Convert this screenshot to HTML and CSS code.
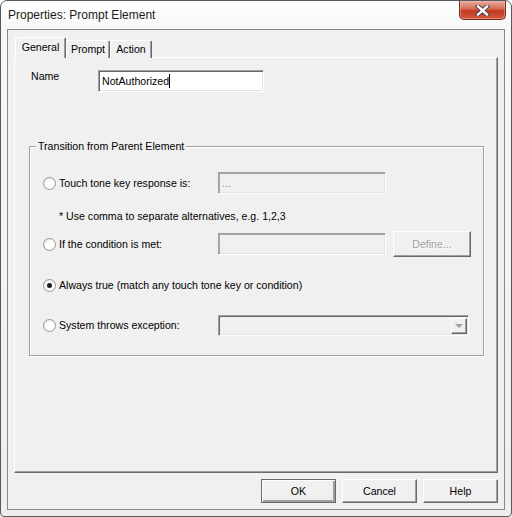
FILE: index.html
```html
<!DOCTYPE html>
<html lang="en">
<head>
    <meta charset="UTF-8">
    <title>Properties: Prompt Element</title>
    <link rel="stylesheet" href="styles.css">
</head>
<body>

<div class="window">
    <div class="titlebar">
        <span class="title">Properties: Prompt Element</span>
        <button class="close" title="Close">
            <svg width="17" height="11" viewBox="0 0 17 11">
                <path d="M4 1.5 L13 9.5 M13 1.5 L4 9.5" stroke="#3b3b4a" stroke-width="4.2" stroke-linecap="square"/>
                <path d="M4 1.5 L13 9.5 M13 1.5 L4 9.5" stroke="#fff" stroke-width="2.4" stroke-linecap="square"/>
            </svg>
        </button>
    </div>

    <div class="client">
        <div class="tabs">
            <div class="tab active">General</div>
            <div class="tab tab-prompt">Prompt</div>
            <div class="tab tab-action">Action</div>
        </div>

        <div class="panel">
            <div class="name-row">
                <label for="nameBox">Name</label>
                <div class="textbox" id="nameBox">NotAuthorized<span class="caret"></span></div>
            </div>

            <div class="group">
                <span class="group-title">Transition from Parent Element</span>

                <div class="opt opt-key">
                    <span class="radio-label"><span class="radio"></span>Touch tone key response is:</span>
                    <div class="textbox disabled wide">...</div>
                </div>

                <div class="note">* Use comma to separate alternatives, e.g. 1,2,3</div>

                <div class="opt opt-cond">
                    <span class="radio-label"><span class="radio"></span>If the condition is met:</span>
                    <div class="textbox disabled wide"></div>
                    <button class="btn define" disabled>Define...</button>
                </div>

                <div class="opt opt-always">
                    <span class="radio-label"><span class="radio checked"></span>Always true (match any touch tone key or condition)</span>
                </div>

                <div class="opt opt-exc">
                    <span class="radio-label"><span class="radio"></span>System throws exception:</span>
                    <div class="combo">
                        <span class="combo-btn"><span class="arrow"></span></span>
                    </div>
                </div>
            </div>
        </div>

        <div class="buttons">
            <button class="btn default">OK</button>
            <button class="btn">Cancel</button>
            <button class="btn">Help</button>
        </div>
    </div>
</div>

</body>
</html>
```

FILE: styles.css
```css
body {
    margin: 0;
    font-family: "Liberation Sans", Arial, sans-serif;
    font-size: 10.6px;
    color: #000;
    background: #fff;
}
.window {
    width: 512px;
    height: 517px;
    box-sizing: border-box;
    border: 1px solid #555a60;
    border-radius: 7px 7px 4px 4px;
    background: linear-gradient(#ffffff, #f7f7f7 28px, #eeeeee);
    overflow: hidden;
}
.titlebar {
    height: 28px;
    display: flex;
    align-items: flex-start;
}
.title {
    padding: 7px 0 0 7px;
    font-size: 12px;
    line-height: 15px;
    color: #1b1b1b;
}
.close {
    margin-left: auto;
    margin-right: 5px;
    width: 47px;
    height: 19px;
    padding: 0;
    border: 1px solid #6f2b1f;
    border-top: none;
    border-radius: 0 0 5px 5px;
    background: linear-gradient(#e9a99b, #d8735c 40%, #c2391f 55%, #d3593d);
    box-shadow: inset 0 0 0 1px rgba(255, 200, 190, 0.45);
    display: flex;
    align-items: center;
    justify-content: center;
}
.close svg {
    display: block;
}
.client {
    margin: 0 6px;
    width: 498px;
    height: 481px;
    box-sizing: border-box;
    border: 1px solid #868a8e;
    background: #f0f0f0;
    padding: 7px 6px 6px 6px;
}
.tabs {
    height: 21px;
    display: flex;
    align-items: flex-end;
    padding-left: 1px;
}
.tab {
    box-sizing: border-box;
    height: 18px;
    border: 1px solid #fff;
    border-right-color: #696969;
    border-bottom: none;
    border-radius: 2px 2px 0 0;
    box-shadow: inset -1px 0 0 #a0a0a0;
    text-align: center;
    line-height: 17px;
    background: #f0f0f0;
}
.tab.active {
    position: relative;
    z-index: 1;
    height: 21px;
    width: 51px;
    line-height: 18px;
}
.tab-prompt {
    width: 44px;
}
.tab-action {
    width: 42px;
}
.panel {
    margin-top: -1px;
    width: 484px;
    height: 416px;
    box-sizing: border-box;
    border: 1px solid #fff;
    border-right-color: #696969;
    border-bottom-color: #696969;
    box-shadow: inset -1px -1px 0 #a0a0a0;
    padding-top: 12px;
}
.name-row {
    display: flex;
    align-items: flex-start;
    padding-left: 16px;
    height: 22px;
}
.name-row label {
    width: 67px;
    line-height: 13px;
}
.textbox {
    box-sizing: border-box;
    width: 166px;
    height: 22px;
    border: 1px solid;
    border-color: #a0a0a0 #fff #fff #a0a0a0;
    box-shadow: inset 1px 1px 0 #696969, inset -1px -1px 0 #e3e3e3;
    background: #fff;
    padding: 0 3px;
    line-height: 20px;
    display: flex;
    align-items: center;
}
.caret {
    display: inline-block;
    width: 1px;
    height: 14px;
    background: #000;
}
.textbox.disabled {
    background: #f0f0f0;
    color: #8a8a8a;
    box-shadow: inset 1px 1px 0 #a8a8a8, inset -1px -1px 0 #e3e3e3;
}
.textbox.wide {
    width: 168px;
}
.group {
    position: relative;
    margin: 54px 13px 0 14px;
    border: 1px solid #a0a0a0;
    box-shadow: 1px 1px 0 #fff, inset 1px 1px 0 #fff;
    padding: 25px 0 19px 13px;
}
.group-title {
    position: absolute;
    top: -7px;
    left: 6px;
    padding: 0 2px;
    background: #f0f0f0;
    line-height: 13px;
}
.opt {
    display: flex;
    align-items: center;
    height: 22px;
}
.opt > * {
    flex-shrink: 0;
}
.radio-label {
    width: 175px;
    display: flex;
    align-items: center;
    white-space: nowrap;
}
.opt-always .radio-label {
    width: auto;
}
.radio {
    box-sizing: border-box;
    width: 13px;
    height: 13px;
    margin-right: 3px;
    border: 1px solid #979797;
    border-radius: 50%;
    background: radial-gradient(circle at 60% 60%, #ffffff 35%, #e2e2e2);
    display: flex;
    align-items: center;
    justify-content: center;
}
.radio.checked::after {
    content: "";
    width: 5px;
    height: 5px;
    border-radius: 50%;
    background: #1c1c1c;
}
.note {
    margin: 14px 0 0 16px;
    height: 16px;
    line-height: 16px;
}
.opt-cond {
    margin-top: 7px;
    height: 26px;
}
.opt-always {
    margin-top: 17px;
}
.opt-exc {
    margin-top: 18px;
}
.btn {
    box-sizing: border-box;
    width: 75px;
    height: 24px;
    padding: 0;
    font: inherit;
    color: #000;
    background: #f0f0f0;
    border: 1px solid;
    border-color: #fff #696969 #696969 #fff;
    box-shadow: inset -1px -1px 0 #a0a0a0;
}
.btn.default {
    border-color: #696969;
    box-shadow: inset 1px 1px 0 #fff, inset -2px -2px 0 #a0a0a0;
}
.define {
    width: 78px;
    height: 26px;
    margin-left: 7px;
    color: #a0a0a0;
    text-shadow: 1px 1px 0 #fff;
}
.combo {
    box-sizing: border-box;
    width: 251px;
    height: 21px;
    border: 1px solid;
    border-color: #a0a0a0 #fff #fff #a0a0a0;
    box-shadow: inset 1px 1px 0 #696969, inset -1px -1px 0 #e3e3e3;
    background: #f0f0f0;
    display: flex;
    justify-content: flex-end;
    padding: 2px 1px 1px 0;
}
.combo-btn {
    box-sizing: border-box;
    width: 16px;
    height: 16px;
    border: 1px solid;
    border-color: #fff #696969 #696969 #fff;
    box-shadow: inset -1px -1px 0 #a0a0a0;
    display: flex;
    align-items: center;
    justify-content: center;
}
.arrow {
    width: 0;
    height: 0;
    border-left: 4px solid transparent;
    border-right: 4px solid transparent;
    border-top: 4px solid #a0a0a0;
}
.buttons {
    margin-top: 6px;
    display: flex;
    justify-content: flex-end;
    gap: 6px;
    width: 484px;
}
```
